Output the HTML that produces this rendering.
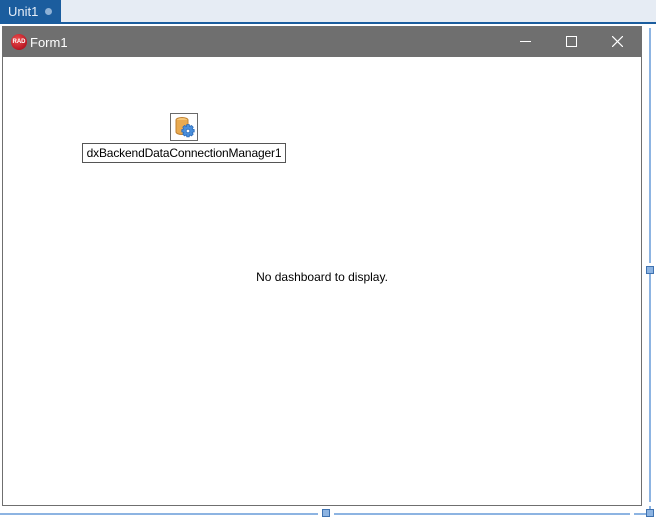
<!DOCTYPE html>
<html><head><style>
body{margin:0;width:656px;height:521px;background:#fff;position:relative;overflow:hidden;font-family:"Liberation Sans",sans-serif}
.a{position:absolute}
</style></head><body>
<div class="a" style="left:0;top:0;width:656px;height:22px;background:#e6ecf4"></div>
<div class="a" style="left:0;top:0;width:61px;height:22px;background:#1b5d9e"></div>
<div class="a" style="left:8px;top:4px;color:#e6eef8;font-size:13px">Unit1</div>
<div class="a" style="left:45px;top:8px;width:7px;height:7px;border-radius:50%;background:#8fb2d6"></div>
<div class="a" style="left:0;top:22px;width:656px;height:2px;background:#1b5d9e"></div>
<div class="a" style="left:2px;top:26px;width:638px;height:478px;border:1px solid #6f6f6f;background:#fff"></div>
<div class="a" style="left:2px;top:26px;width:640px;height:31px;background:#6f6f6f"></div>
<div class="a" style="left:11px;top:34px;width:16px;height:16px;border-radius:50%;background:radial-gradient(circle at 40% 35%,#f05050,#a00010);color:#fff;font-size:6px;font-weight:bold;line-height:16px;text-align:center">RAD</div>
<div class="a" style="left:30px;top:35px;color:#fff;font-size:13px">Form1</div>
<div class="a" style="left:520px;top:41px;width:11px;height:1px;background:#fff"></div>
<div class="a" style="left:566px;top:36px;width:9px;height:9px;border:1px solid #fff"></div>
<svg class="a" style="left:612px;top:36px" width="11" height="11"><path d="M0 0L11 11M11 0L0 11" stroke="#fff" stroke-width="1.2"/></svg>
<div class="a" style="left:170px;top:113px;width:26px;height:26px;border:1px solid #6a6a6a;background:#fff"></div>
<svg class="a" style="left:172px;top:115px" width="24" height="24">
<ellipse cx="10" cy="5" rx="6" ry="2.5" fill="#f5c77a" stroke="#c08030"/>
<path d="M4 5v12a6 2.5 0 0 0 12 0V5" fill="#e9aa50" stroke="#c08030"/>
<g transform="translate(16 16)" fill="#4a8fdc" stroke="#2a6ab8" stroke-width="0.8">
<path d="M-1.2-6.5h2.4l.5 2 1.8-1 1.7 1.7-1 1.8 2 .5v2.4l-2 .5 1 1.8-1.7 1.7-1.8-1-.5 2h-2.4l-.5-2-1.8 1-1.7-1.7 1-1.8-2-.5v-2.4l2-.5-1-1.8 1.7-1.7 1.8 1z"/>
<circle r="1.8" fill="#fff"/></g>
</svg>
<div class="a" style="left:82px;top:143px;width:202px;height:18px;border:1px solid #555;background:#fff;font-size:12px;letter-spacing:-0.15px;line-height:18px;text-align:center;color:#000;white-space:nowrap">dxBackendDataConnectionManager1</div>
<div class="a" style="left:0;top:270px;width:644px;text-align:center;font-size:12px;color:#000">No dashboard to display.</div>
<div class="a" style="left:649px;top:28px;width:2px;height:484px;background:repeating-linear-gradient(#8db4e2 0 235px,#fff 235px 239px)"></div>
<div class="a" style="left:646px;top:266px;width:6px;height:6px;background:#8db4e2;border:1px solid #3f72b0"></div>
<div class="a" style="left:0;top:513px;width:318px;height:2px;background:#8db4e2"></div>
<div class="a" style="left:334px;top:513px;width:296px;height:2px;background:#8db4e2"></div>
<div class="a" style="left:634px;top:513px;width:12px;height:2px;background:#8db4e2"></div>
<div class="a" style="left:322px;top:509px;width:6px;height:6px;background:#8db4e2;border:1px solid #3f72b0"></div>
<div class="a" style="left:646px;top:509px;width:6px;height:6px;background:#8db4e2;border:1px solid #3f72b0"></div>
</body></html>
